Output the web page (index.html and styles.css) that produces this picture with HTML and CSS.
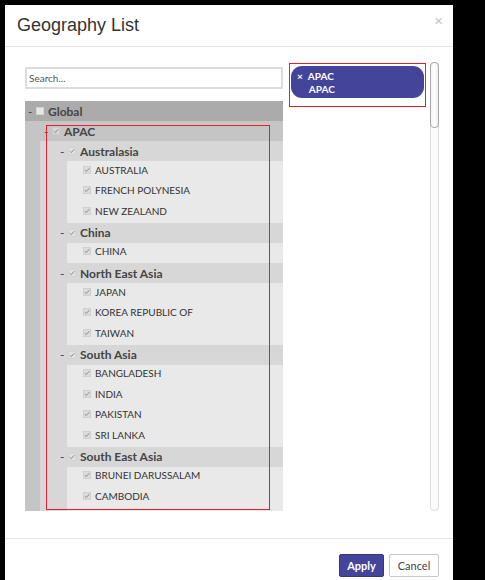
FILE: index.html
```html
<!DOCTYPE html>
<html>
<head>
<meta charset="utf-8">
<link rel="stylesheet" href="styles.css">
</head>
<body>
<div class="modal">
  <div class="header">
    <span class="title">Geography List</span>
    <span class="close">×</span>
  </div>
  <div class="body">
    <div class="left">
      <div class="search">Search...</div>
      <div class="tree">
        <div class="row g0"><span class="dash">-</span><svg class="cb" viewBox="0 0 8 8"><rect x="0.5" y="0.5" width="7" height="7" fill="#e6e6e6" stroke="#d4d4d4"/></svg><span class="glabel">Global</span></div>
        <div class="l1">
          <div class="row g1"><span class="dash">-</span><svg class="cb" viewBox="0 0 8 8"><rect x="0.5" y="0.5" width="7" height="7" fill="#d6d6d6" stroke="#cbcbcb"/><path d="M1.8 4.2 L3.3 5.6 L6.3 2.2" fill="none" stroke="#8a8a8a" stroke-width="1"/></svg><span class="glabel">APAC</span></div>
          <div class="l2">
            <div class="row g2"><span class="dash">-</span><svg class="cb" viewBox="0 0 8 8"><rect x="0.5" y="0.5" width="7" height="7" fill="#e2e2e2" stroke="#d2d2d2"/><path d="M1.8 4.2 L3.3 5.6 L6.3 2.2" fill="none" stroke="#8a8a8a" stroke-width="1"/></svg><span class="glabel">Australasia</span></div>
            <div class="l3">
              <div class="leaf"><svg class="cb" viewBox="0 0 8 8"><rect x="0.5" y="0.5" width="7" height="7" fill="#dcdcdc" stroke="#d0d0d0"/><path d="M1.8 4.2 L3.3 5.6 L6.3 2.2" fill="none" stroke="#8a8a8a" stroke-width="1"/></svg><span class="llabel">AUSTRALIA</span></div>
              <div class="leaf"><svg class="cb" viewBox="0 0 8 8"><rect x="0.5" y="0.5" width="7" height="7" fill="#dcdcdc" stroke="#d0d0d0"/><path d="M1.8 4.2 L3.3 5.6 L6.3 2.2" fill="none" stroke="#8a8a8a" stroke-width="1"/></svg><span class="llabel">FRENCH POLYNESIA</span></div>
              <div class="leaf"><svg class="cb" viewBox="0 0 8 8"><rect x="0.5" y="0.5" width="7" height="7" fill="#dcdcdc" stroke="#d0d0d0"/><path d="M1.8 4.2 L3.3 5.6 L6.3 2.2" fill="none" stroke="#8a8a8a" stroke-width="1"/></svg><span class="llabel">NEW ZEALAND</span></div>
            </div>
            <div class="row g2"><span class="dash">-</span><svg class="cb" viewBox="0 0 8 8"><rect x="0.5" y="0.5" width="7" height="7" fill="#e2e2e2" stroke="#d2d2d2"/><path d="M1.8 4.2 L3.3 5.6 L6.3 2.2" fill="none" stroke="#8a8a8a" stroke-width="1"/></svg><span class="glabel">China</span></div>
            <div class="l3">
              <div class="leaf"><svg class="cb" viewBox="0 0 8 8"><rect x="0.5" y="0.5" width="7" height="7" fill="#dcdcdc" stroke="#d0d0d0"/><path d="M1.8 4.2 L3.3 5.6 L6.3 2.2" fill="none" stroke="#8a8a8a" stroke-width="1"/></svg><span class="llabel">CHINA</span></div>
            </div>
            <div class="row g2"><span class="dash">-</span><svg class="cb" viewBox="0 0 8 8"><rect x="0.5" y="0.5" width="7" height="7" fill="#e2e2e2" stroke="#d2d2d2"/><path d="M1.8 4.2 L3.3 5.6 L6.3 2.2" fill="none" stroke="#8a8a8a" stroke-width="1"/></svg><span class="glabel">North East Asia</span></div>
            <div class="l3">
              <div class="leaf"><svg class="cb" viewBox="0 0 8 8"><rect x="0.5" y="0.5" width="7" height="7" fill="#dcdcdc" stroke="#d0d0d0"/><path d="M1.8 4.2 L3.3 5.6 L6.3 2.2" fill="none" stroke="#8a8a8a" stroke-width="1"/></svg><span class="llabel">JAPAN</span></div>
              <div class="leaf"><svg class="cb" viewBox="0 0 8 8"><rect x="0.5" y="0.5" width="7" height="7" fill="#dcdcdc" stroke="#d0d0d0"/><path d="M1.8 4.2 L3.3 5.6 L6.3 2.2" fill="none" stroke="#8a8a8a" stroke-width="1"/></svg><span class="llabel">KOREA REPUBLIC OF</span></div>
              <div class="leaf"><svg class="cb" viewBox="0 0 8 8"><rect x="0.5" y="0.5" width="7" height="7" fill="#dcdcdc" stroke="#d0d0d0"/><path d="M1.8 4.2 L3.3 5.6 L6.3 2.2" fill="none" stroke="#8a8a8a" stroke-width="1"/></svg><span class="llabel">TAIWAN</span></div>
            </div>
            <div class="row g2"><span class="dash">-</span><svg class="cb" viewBox="0 0 8 8"><rect x="0.5" y="0.5" width="7" height="7" fill="#e2e2e2" stroke="#d2d2d2"/><path d="M1.8 4.2 L3.3 5.6 L6.3 2.2" fill="none" stroke="#8a8a8a" stroke-width="1"/></svg><span class="glabel">South Asia</span></div>
            <div class="l3">
              <div class="leaf"><svg class="cb" viewBox="0 0 8 8"><rect x="0.5" y="0.5" width="7" height="7" fill="#dcdcdc" stroke="#d0d0d0"/><path d="M1.8 4.2 L3.3 5.6 L6.3 2.2" fill="none" stroke="#8a8a8a" stroke-width="1"/></svg><span class="llabel">BANGLADESH</span></div>
              <div class="leaf"><svg class="cb" viewBox="0 0 8 8"><rect x="0.5" y="0.5" width="7" height="7" fill="#dcdcdc" stroke="#d0d0d0"/><path d="M1.8 4.2 L3.3 5.6 L6.3 2.2" fill="none" stroke="#8a8a8a" stroke-width="1"/></svg><span class="llabel">INDIA</span></div>
              <div class="leaf"><svg class="cb" viewBox="0 0 8 8"><rect x="0.5" y="0.5" width="7" height="7" fill="#dcdcdc" stroke="#d0d0d0"/><path d="M1.8 4.2 L3.3 5.6 L6.3 2.2" fill="none" stroke="#8a8a8a" stroke-width="1"/></svg><span class="llabel">PAKISTAN</span></div>
              <div class="leaf"><svg class="cb" viewBox="0 0 8 8"><rect x="0.5" y="0.5" width="7" height="7" fill="#dcdcdc" stroke="#d0d0d0"/><path d="M1.8 4.2 L3.3 5.6 L6.3 2.2" fill="none" stroke="#8a8a8a" stroke-width="1"/></svg><span class="llabel">SRI LANKA</span></div>
            </div>
            <div class="row g2"><span class="dash">-</span><svg class="cb" viewBox="0 0 8 8"><rect x="0.5" y="0.5" width="7" height="7" fill="#e2e2e2" stroke="#d2d2d2"/><path d="M1.8 4.2 L3.3 5.6 L6.3 2.2" fill="none" stroke="#8a8a8a" stroke-width="1"/></svg><span class="glabel">South East Asia</span></div>
            <div class="l3">
              <div class="leaf"><svg class="cb" viewBox="0 0 8 8"><rect x="0.5" y="0.5" width="7" height="7" fill="#dcdcdc" stroke="#d0d0d0"/><path d="M1.8 4.2 L3.3 5.6 L6.3 2.2" fill="none" stroke="#8a8a8a" stroke-width="1"/></svg><span class="llabel">BRUNEI DARUSSALAM</span></div>
              <div class="leaf"><svg class="cb" viewBox="0 0 8 8"><rect x="0.5" y="0.5" width="7" height="7" fill="#dcdcdc" stroke="#d0d0d0"/><path d="M1.8 4.2 L3.3 5.6 L6.3 2.2" fill="none" stroke="#8a8a8a" stroke-width="1"/></svg><span class="llabel">CAMBODIA</span></div>
              <div class="leaf"><svg class="cb" viewBox="0 0 8 8"><rect x="0.5" y="0.5" width="7" height="7" fill="#dcdcdc" stroke="#d0d0d0"/><path d="M1.8 4.2 L3.3 5.6 L6.3 2.2" fill="none" stroke="#8a8a8a" stroke-width="1"/></svg></div>
            </div>
          </div>
        </div>
        <div class="highlight"></div>
      </div>
    </div>
    <div class="middle">
      <div class="selected">
        <div class="pill">
          <span class="px">×</span>
          <div class="ptext"><div>APAC</div><div class="psub">APAC</div></div>
        </div>
      </div>
    </div>
    <div class="scrolltrack"><div class="thumb"></div></div>
  </div>
  <div class="footer">
    <button class="btn apply">Apply</button>
    <button class="btn cancel">Cancel</button>
  </div>
</div>
</body>
</html>
```

FILE: styles.css
```css
html, body {
  margin: 0;
  padding: 0;
  background: #000;
  height: 580px;
  overflow: hidden;
}
.modal {
  margin: 5px 0 0 5px;
  width: 448px;
  height: 600px;
  background: #fff;
  font-family: Lato, "Liberation Sans", sans-serif;
}
.header {
  height: 41px;
  border-bottom: 1px solid #e5e5e5;
  display: flex;
  align-items: center;
  justify-content: space-between;
  padding: 0 12px;
  box-sizing: content-box;
}
.title {
  font-family: "Liberation Sans", Arial, sans-serif;
  font-size: 18px;
  color: #333;
}
.close {
  font-family: "Liberation Sans", Arial, sans-serif;
  font-size: 15px;
  color: #c4c4c4;
  margin-right: -2px;
  margin-top: -10px;
}
.body {
  display: flex;
  align-items: flex-start;
  padding: 15px 0 0 20px;
  height: 476px;
}
.left {
  width: 258px;
  margin-top: 5px;
}
.search {
  height: 18px;
  border: 2px solid #dcdcdc;
  font-size: 10px;
  line-height: 18px;
  color: #555;
  padding-left: 2px;
}
.tree {
  position: relative;
  margin-top: 12px;
  height: 410px;
  overflow: hidden;
  background: #c5c5c5;
}
.row {
  height: 20px;
  display: flex;
  align-items: center;
  color: #3d3d3d;
}
.dash {
  width: 8px;
  font-size: 12px;
  color: #444;
}
.cb {
  width: 8px;
  height: 8px;
  margin-right: 4px;
  flex: none;
}
.glabel {
  font-size: 12px;
  font-weight: bold;
  color: #454545;
}
.g0 {
  background: #ababab;
  padding-left: 3px;
}
.l1 {
  background: #c5c5c5;
  padding-left: 15px;
}
.g1 {
  padding-left: 4px;
}
.l2 {
  background: #d7d7d7;
}
.g2 {
  padding-left: 20px;
}
.l3 {
  background: #e9e9e9;
  margin-left: 27px;
}
.leaf {
  height: 20.5px;
  display: flex;
  align-items: center;
  padding-left: 16px;
}
.llabel {
  font-size: 10px;
  color: #333;
  margin-top: -3px;
}
.leaf .cb {
  margin-top: -3px;
}
.highlight {
  position: absolute;
  left: 21px;
  top: 24px;
  width: 222px;
  height: 383px;
  border: 1px solid #e0202a;
}
.middle {
  width: 137px;
  margin-left: 6px;
  margin-top: 1px;
}
.selected {
  border: 1px solid #e0202a;
  padding: 2px 1px 8px 1px;
}
.pill {
  height: 32px;
  background: #43449a;
  border-radius: 11px;
  display: flex;
  align-items: flex-start;
  padding: 4px 0 0 6px;
  box-sizing: border-box;
  color: #fff;
  font-size: 10px;
  font-weight: bold;
  line-height: 13px;
}
.px {
  font-size: 10px;
  margin-right: 5px;
}
.psub {
  padding-left: 1px;
}
.scrolltrack {
  margin-left: 4px;
  width: 7px;
  height: 447px;
  border: 1px solid #dedede;
  border-radius: 4px;
  background: #fbfbfb;
}
.thumb {
  height: 64px;
  margin: -1px;
  border: 1px solid #a9a9a9;
  border-radius: 4px;
  background: linear-gradient(to right, #f4f4f4, #fff, #ececec);
}
.footer {
  border-top: 1px solid #e5e5e5;
  display: flex;
  justify-content: flex-end;
  padding: 15px 14px 0 0;
  gap: 5px;
}
.btn {
  height: 23px;
  font-family: Lato, "Liberation Sans", sans-serif;
  font-size: 11px;
  border-radius: 2px;
  padding: 0;
}
.apply {
  width: 45px;
  background: #43449a;
  color: #fff;
  font-weight: bold;
  border: 1px solid #35367e;
}
.cancel {
  width: 50px;
  background: #fff;
  color: #444;
  border: 1px solid #c8c8c8;
}
```
